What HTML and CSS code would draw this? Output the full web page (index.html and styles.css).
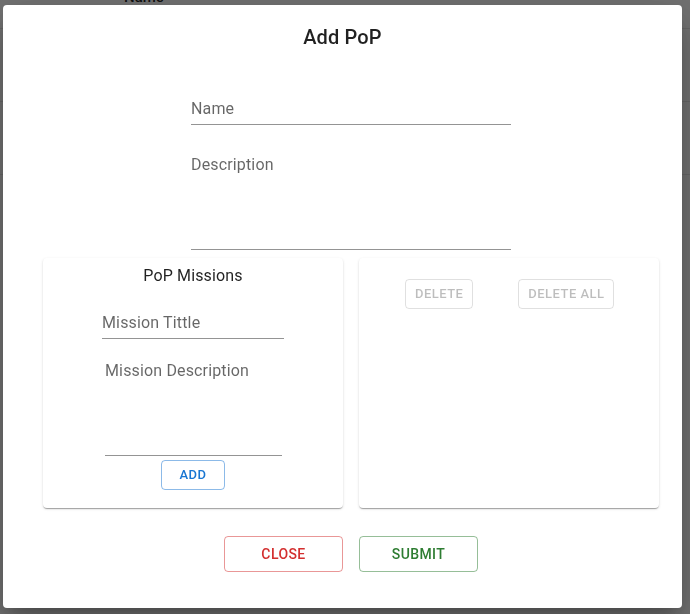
FILE: index.html
```html
<!DOCTYPE html>
<html lang="en">
<head>
<meta charset="utf-8">
<title>Add PoP</title>
<link rel="stylesheet" href="styles.css">
</head>
<body>
<div class="page">
  <div class="table-head"><span class="th-name">Name</span></div>
  <div class="table-row"></div>
  <div class="table-row"></div>
</div>

<div class="backdrop">
  <div class="dialog" role="dialog">
    <h2 class="dialog-title">Add PoP</h2>
    <div class="dialog-content">
      <div class="field field-main"><span class="label">Name</span></div>
      <div class="field field-main field-multi"><span class="label">Description</span></div>

      <div class="cards">
        <div class="card card-left">
          <div class="card-title">PoP Missions</div>
          <div class="field field-mtitle"><span class="label">Mission Tittle</span></div>
          <div class="field field-mdesc field-multi"><span class="label">Mission Description</span></div>
          <button class="btn btn-small btn-primary">ADD</button>
        </div>
        <div class="card card-right">
          <div class="card-actions">
            <button class="btn btn-small btn-disabled" disabled>DELETE</button>
            <button class="btn btn-small btn-disabled" disabled>DELETE ALL</button>
          </div>
        </div>
      </div>

      <div class="dialog-actions">
        <button class="btn btn-medium btn-error">CLOSE</button>
        <button class="btn btn-medium btn-success">SUBMIT</button>
      </div>
    </div>
  </div>
</div>
</body>
</html>
```

FILE: styles.css
```css
* { box-sizing: border-box; }

html, body {
  margin: 0;
  padding: 0;
  height: 100%;
  background: #ffffff;
  font-family: Roboto, "Liberation Sans", Arial, sans-serif;
}

/* background page */
.table-head {
  height: 29px;
  border-bottom: 1px solid #e6e6e6;
  padding-left: 124px;
  overflow: hidden;
}
.th-name {
  display: block;
  font-size: 15px;
  font-weight: 500;
  color: rgba(0,0,0,0.87);
  line-height: 16px;
  margin-top: -11px;
}
.table-row {
  height: 73px;
  border-bottom: 1px solid #e6e6e6;
}

/* overlay */
.backdrop {
  position: fixed;
  inset: 0;
  background: rgba(0,0,0,0.555);
  display: flex;
  align-items: flex-start;
  justify-content: flex-start;
  padding: 5px 0 0 3px;
}

.dialog {
  width: 679px;
  height: 603px;
  background: #ffffff;
  border-radius: 4px;
  box-shadow: 0px 11px 15px -7px rgba(0,0,0,0.2), 0px 24px 38px 3px rgba(0,0,0,0.14), 0px 9px 46px 8px rgba(0,0,0,0.12);
  display: flex;
  flex-direction: column;
}

.dialog-title {
  margin: 0;
  padding: 16px 24px;
  font-size: 20px;
  font-weight: 500;
  line-height: 32px;
  letter-spacing: 0.15px;
  text-align: center;
  color: rgba(0,0,0,0.87);
}

.dialog-content {
  padding: 8px 23px 36px 40px;
  display: flex;
  flex-direction: column;
  align-items: center;
}

/* text fields */
.field {
  border-bottom: 1px solid rgba(0,0,0,0.42);
  padding-top: 20px;
  padding-bottom: 4px;
}
.field .label {
  display: block;
  font-size: 16px;
  line-height: 23px;
  letter-spacing: 0.15px;
  color: rgba(0,0,0,0.6);
}
.field-multi {
  padding-bottom: 73px;
}
.field-main {
  width: 320px;
}
.field-main + .field-main {
  margin-top: 8px;
}

/* cards */
.cards {
  margin-top: 8px;
  display: flex;
  gap: 16px;
}
.card {
  width: 300px;
  height: 250px;
  background: #fff;
  border-radius: 4px;
  box-shadow: 0px 2px 1px -1px rgba(0,0,0,0.2), 0px 1px 1px 0px rgba(0,0,0,0.14), 0px 1px 3px 0px rgba(0,0,0,0.12);
}
.card-left {
  display: flex;
  flex-direction: column;
  align-items: center;
  padding-top: 6px;
}
.card-title {
  font-size: 16px;
  line-height: 24px;
  letter-spacing: 0.15px;
  color: rgba(0,0,0,0.87);
}
.field-mtitle {
  width: 182px;
  margin-top: 3px;
}
.field-mdesc {
  width: 177px;
  margin-left: 1px;
}

.card-left .btn {
  margin-top: 4px;
}

.card-actions {
  display: flex;
  gap: 45px;
  padding: 21px 0 0 46px;
}

/* buttons */
.btn {
  font-family: Roboto, "Liberation Sans", Arial, sans-serif;
  font-weight: 500;
  text-transform: uppercase;
  background: transparent;
  border-radius: 4px;
  cursor: pointer;
  min-width: 64px;
}
.btn-small {
  font-size: 13px;
  line-height: 22px;
  letter-spacing: 0.46px;
  padding: 3px 9px;
  height: 30px;
}
.btn-medium {
  font-size: 14px;
  line-height: 24px;
  letter-spacing: 0.4px;
  padding: 5px 15px;
  height: 36px;
  width: 118.5px;
}
.btn-primary {
  color: #1976d2;
  border: 1px solid rgba(25,118,210,0.5);
}
.btn-disabled {
  color: rgba(0,0,0,0.26);
  border: 1px solid rgba(0,0,0,0.12);
  cursor: default;
}
.btn-error {
  color: #d32f2f;
  border: 1px solid rgba(211,47,47,0.5);
}
.btn-success {
  color: #2e7d32;
  border: 1px solid rgba(46,125,50,0.5);
}

.dialog-actions {
  margin-top: 28px;
  display: flex;
  gap: 16.5px;
}
```
